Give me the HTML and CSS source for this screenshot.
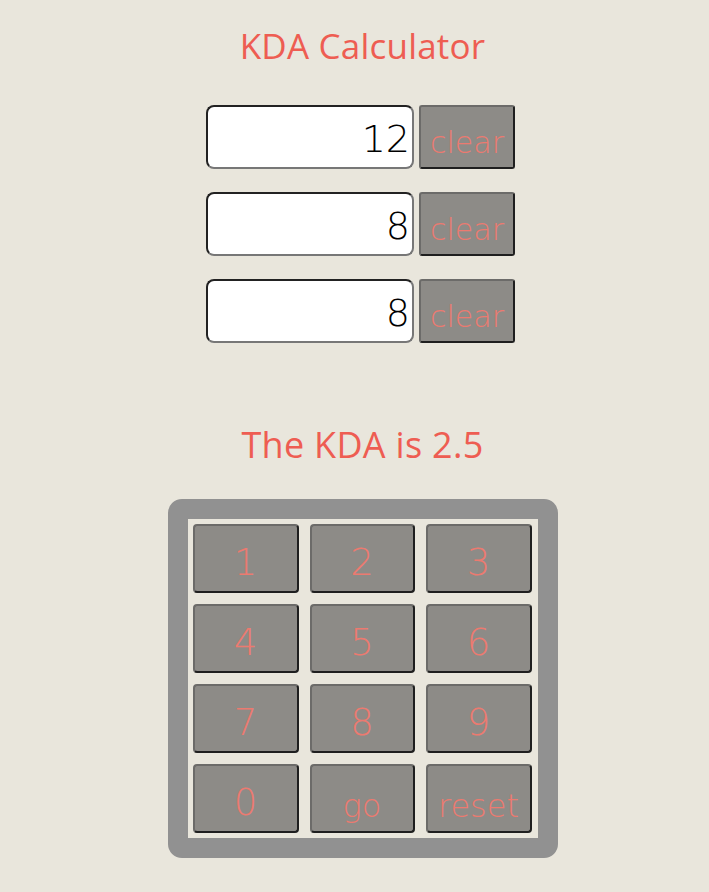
FILE: index.html
```html
<!DOCTYPE html>
<html>
<head>
<meta charset="utf-8">
<title>KDA Calculator</title>
<link rel="stylesheet" href="styles.css">
</head>
<body>
<main class="app">
  <h1 class="title">KDA Calculator</h1>
  <div class="fields">
    <div class="field-row">
      <input class="num-input" type="text" value="12">
      <button class="clear-btn">clear</button>
    </div>
    <div class="field-row">
      <input class="num-input" type="text" value="8">
      <button class="clear-btn">clear</button>
    </div>
    <div class="field-row">
      <input class="num-input" type="text" value="8">
      <button class="clear-btn">clear</button>
    </div>
  </div>
  <h2 class="result">The KDA is 2.5</h2>
  <div class="keypad">
    <div class="keys">
      <button class="key">1</button>
      <button class="key">2</button>
      <button class="key">3</button>
      <button class="key">4</button>
      <button class="key">5</button>
      <button class="key">6</button>
      <button class="key">7</button>
      <button class="key">8</button>
      <button class="key">9</button>
      <button class="key">0</button>
      <button class="key key-word">go</button>
      <button class="key key-word">reset</button>
    </div>
  </div>
</main>
</body>
</html>
```

FILE: styles.css
```css
html, body {
  margin: 0;
  padding: 0;
}
body {
  background: #e9e6dc;
  font-family: "DejaVu Sans", "Open Sans", sans-serif;
  width: 709px;
  height: 892px;
  overflow: hidden;
}
.app {
  display: flex;
  flex-direction: column;
  align-items: center;
  padding-left: 16px;
}
.title {
  margin: 24px 0 0 0;
  font-family: "Open Sans", "DejaVu Sans", sans-serif;
  font-size: 35px;
  font-weight: 400;
  color: #ee5d52;
  line-height: 44px;
  letter-spacing: 0.2px;
}
.fields {
  margin-top: 37px;
  display: flex;
  flex-direction: column;
  gap: 23px;
}
.field-row {
  display: flex;
  gap: 5px;
  margin-left: -4px;
}
.num-input {
  box-sizing: border-box;
  width: 208px;
  height: 64px;
  border: 2px solid;
  border-color: #222 #777 #777 #222;
  border-radius: 8px;
  background: #fff;
  text-align: right;
  font-family: inherit;
  font-size: 38px;
  font-weight: 200;
  color: #000;
  padding: 4px 2px 0 0;
  outline: none;
}
.clear-btn {
  box-sizing: border-box;
  width: 96px;
  height: 64px;
  border: 2px solid;
  border-color: #6c6b69 #1f1f1f #1f1f1f #6c6b69;
  border-radius: 3px;
  background: #8d8b87;
  color: #ec7a70;
  font-family: inherit;
  font-size: 30px;
  font-weight: 300;
  padding: 10px 0 0 0;
}
.result {
  margin: 80px 0 0 0;
  font-family: "Open Sans", "DejaVu Sans", sans-serif;
  font-size: 36px;
  font-weight: 400;
  color: #ee5d52;
  line-height: 44px;
  letter-spacing: 0.3px;
}
.keypad {
  margin-top: 32px;
  box-sizing: border-box;
  width: 390px;
  border: 20px solid #919191;
  border-radius: 14px;
  background: #919191;
}
.keys {
  background: #e9e6dc;
  padding: 5px;
  display: grid;
  grid-template-columns: 106px 105px 106px;
  grid-auto-rows: 69px;
  column-gap: 11px;
  row-gap: 11px;
}
.key {
  box-sizing: border-box;
  border: 2px solid;
  border-color: #6c6b69 #1f1f1f #1f1f1f #6c6b69;
  border-radius: 4px;
  background: #8d8b87;
  color: #ec7a70;
  font-family: inherit;
  font-size: 37px;
  font-weight: 200;
  padding: 8px 0 0 0;
}
.key-word {
  font-size: 32px;
  padding-top: 14px;
}
```
